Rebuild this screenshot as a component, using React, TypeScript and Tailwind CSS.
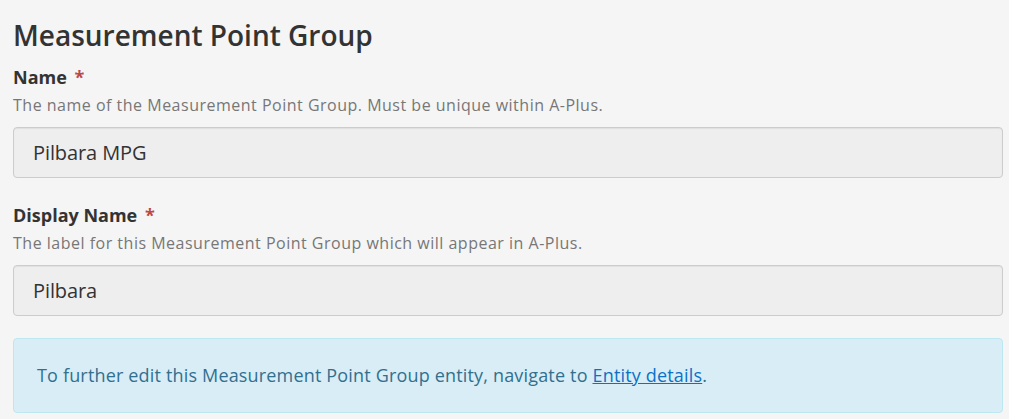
export default function App() {
  return (
    <div className="min-h-[419px] bg-[#f5f5f5] pl-[13px] pr-[6px] pt-[14px] pb-[6px] text-[#333] [font-family:'Open_Sans',sans-serif]">
      <h1 className="text-[28px] leading-[42px] font-semibold text-[#333]">Measurement Point Group</h1>

      <Field
        label="Name"
        help="The name of the Measurement Point Group. Must be unique within A-Plus."
        value="Pilbara MPG"
        first
      />
      <Field
        label="Display Name"
        help="The label for this Measurement Point Group which will appear in A-Plus."
        value="Pilbara"
      />

      <div className="mt-[22px] flex h-[75px] items-center rounded-[4px] border border-[#bce8f1] bg-[#d9edf7] px-[23px] text-[18px] tracking-[0.17px] text-[#31708f]">
        <span>
          To further edit this Measurement Point Group entity, navigate to{' '}
          <a href="#" className="text-[#0b72c6] underline">
            Entity details
          </a>
          .
        </span>
      </div>
    </div>
  );
}

function Field({
  label,
  help,
  value,
  first,
}: {
  label: string;
  help: string;
  value: string;
  first?: boolean;
}) {
  return (
    <div className={first ? 'mt-[9px]' : 'mt-[25px]'}>
      <div className="text-[18px] leading-[24px] font-bold text-[#333]">
        {label} <span className="ml-[3px] text-[#b94a48]">*</span>
      </div>
      <p className="mt-[6px] text-[16px] leading-[20px] tracking-[0.5px] text-[#777]">{help}</p>
      <div className="mt-[12px] flex h-[51px] items-center rounded-[4px] border border-[#cccccc] bg-[#eeeeee] px-[19px] text-[20px] tracking-[-0.1px] text-[#333] shadow-[inset_0_1px_1px_rgba(0,0,0,0.06)]">
        {value}
      </div>
    </div>
  );
}
